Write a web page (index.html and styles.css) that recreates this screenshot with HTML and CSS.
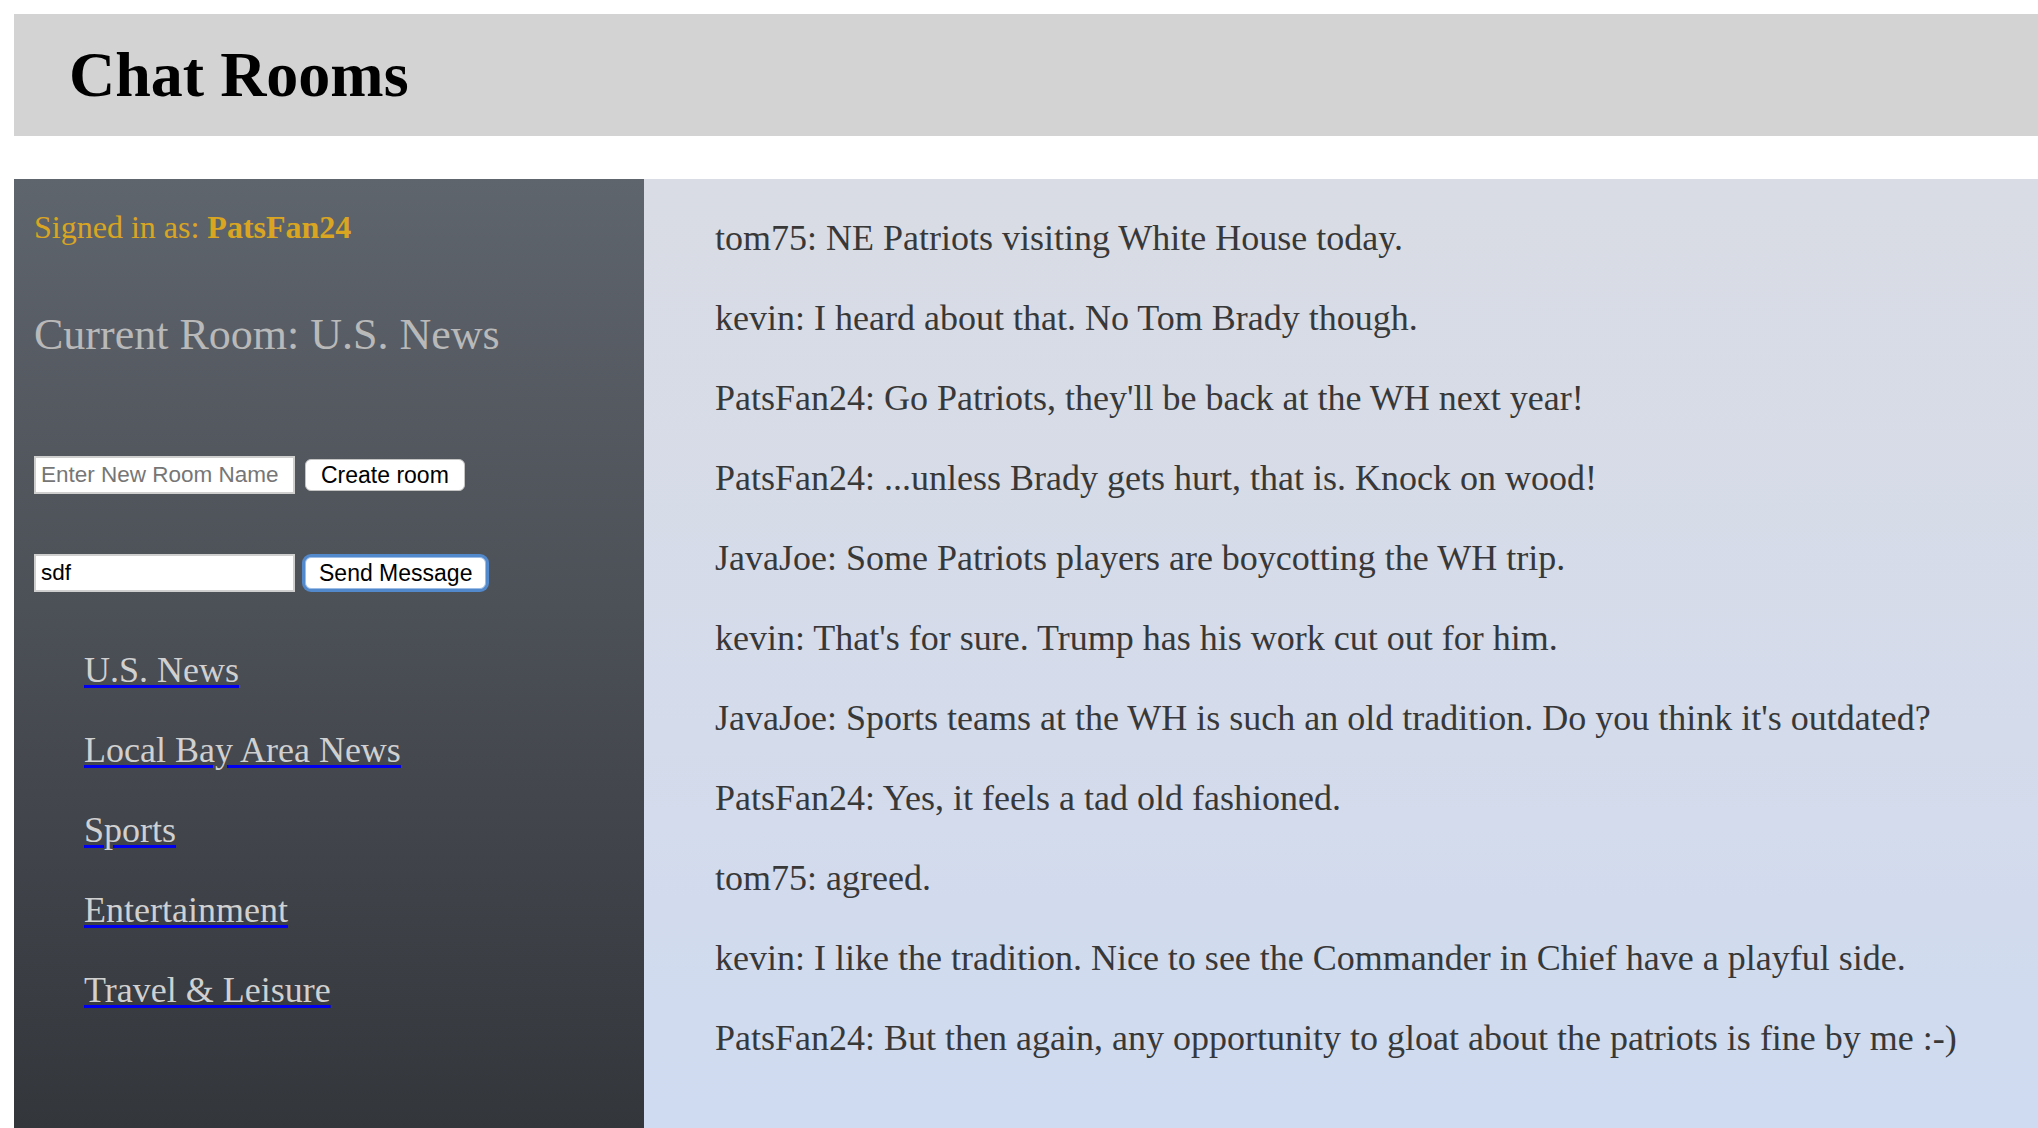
FILE: index.html
```html
<!DOCTYPE html>
<html lang="en">
<head>
<meta charset="utf-8">
<title>Chat Rooms</title>
<link rel="stylesheet" href="styles.css">
</head>
<body>
<header class="topbar">
  <h1 class="title">Chat Rooms</h1>
</header>
<main class="layout">
  <aside class="sidebar">
    <p class="signed">Signed in as: <b>PatsFan24</b></p>
    <h2 class="current">Current Room: U.S. News</h2>
    <form class="row row-room">
      <input class="field" type="text" placeholder="Enter New Room Name">
      <button class="btn" type="button">Create room</button>
    </form>
    <form class="row row-msg">
      <input class="field" type="text" value="sdf">
      <button class="btn btn-focus" type="button">Send Message</button>
    </form>
    <ul class="rooms">
      <li><a href="#">U.S. News</a></li>
      <li><a href="#">Local Bay Area News</a></li>
      <li><a href="#">Sports</a></li>
      <li><a href="#">Entertainment</a></li>
      <li><a href="#">Travel &amp; Leisure</a></li>
    </ul>
  </aside>
  <section class="chat">
    <p class="msg">tom75: NE Patriots visiting White House today.</p>
    <p class="msg">kevin: I heard about that. No Tom Brady though.</p>
    <p class="msg">PatsFan24: Go Patriots, they'll be back at the WH next year!</p>
    <p class="msg">PatsFan24: ...unless Brady gets hurt, that is. Knock on wood!</p>
    <p class="msg">JavaJoe: Some Patriots players are boycotting the WH trip.</p>
    <p class="msg">kevin: That's for sure. Trump has his work cut out for him.</p>
    <p class="msg">JavaJoe: Sports teams at the WH is such an old tradition. Do you think it's outdated?</p>
    <p class="msg">PatsFan24: Yes, it feels a tad old fashioned.</p>
    <p class="msg">tom75: agreed.</p>
    <p class="msg">kevin: I like the tradition. Nice to see the Commander in Chief have a playful side.</p>
    <p class="msg">PatsFan24: But then again, any opportunity to gloat about the patriots is fine by me :-)</p>
  </section>
</main>
</body>
</html>
```

FILE: styles.css
```css
html, body {
  overflow: hidden;
}

body {
  margin: 14px 0 0 14px;
  font-family: "Liberation Serif", "Times New Roman", serif;
  background: #ffffff;
  color: #000;
}

.topbar {
  height: 122px;
  background: #d3d3d3;
  display: flex;
  align-items: center;
  padding-left: 55px;
}

.title {
  margin: 0;
  font-size: 64px;
  font-weight: bold;
  line-height: 1;
  color: #000;
}

.layout {
  margin-top: 43px;
  height: 949px;
  display: flex;
}

.sidebar {
  width: 630px;
  flex: none;
  box-sizing: border-box;
  padding: 30px 0 0 20px;
  background: linear-gradient(to bottom, #5f656d 0%, #4c5057 45%, #33363b 100%);
}

.signed {
  margin: 0;
  font-size: 32px;
  line-height: 37px;
  color: #daa520;
}

.signed b {
  font-weight: bold;
}

.current {
  margin: 63px 0 0;
  font-size: 44px;
  line-height: 51px;
  font-weight: normal;
  color: #b9b9b9;
}

.row {
  display: flex;
  align-items: center;
  gap: 10px;
  margin: 0;
}

.row-room {
  margin-top: 96px;
}

.row-msg {
  margin-top: 60px;
}

.field {
  width: 261px;
  height: 38px;
  box-sizing: border-box;
  margin: 0;
  padding: 0 5px;
  border: 2px solid #cfcfcf;
  background: #fff;
  font-family: "Liberation Sans", Arial, sans-serif;
  font-size: 22.5px;
  color: #000;
  outline: none;
}

.field::placeholder {
  color: #767676;
}

.btn {
  height: 32px;
  box-sizing: border-box;
  margin: 0;
  padding: 0 15px;
  border: 1px solid #c4c4c4;
  border-radius: 6px;
  background: #fff;
  font-family: "Liberation Sans", Arial, sans-serif;
  font-size: 23px;
  line-height: 1;
  color: #000;
}

.btn-focus {
  padding: 0 13px;
  border-color: #9dbde6;
  box-shadow: 0 0 0 3px #5289cc;
}

.rooms {
  list-style: none;
  margin: 57px 0 0;
  padding: 0 0 0 50px;
}

.rooms li {
  font-size: 36px;
  line-height: 42px;
  margin-bottom: 38px;
}

.rooms a {
  color: #d0d0d0;
  text-decoration: underline;
  text-decoration-color: #0000ee;
  text-decoration-thickness: 3px;
  text-underline-offset: 3px;
}

.chat {
  flex: 1;
  box-sizing: border-box;
  padding: 38px 0 0 71px;
  background: linear-gradient(to bottom, #d9dce4 0%, #d4dbeb 60%, #cfdbf1 100%);
}

.msg {
  margin: 0 0 38px;
  font-size: 36px;
  line-height: 42px;
  color: #383838;
  white-space: nowrap;
}
```
